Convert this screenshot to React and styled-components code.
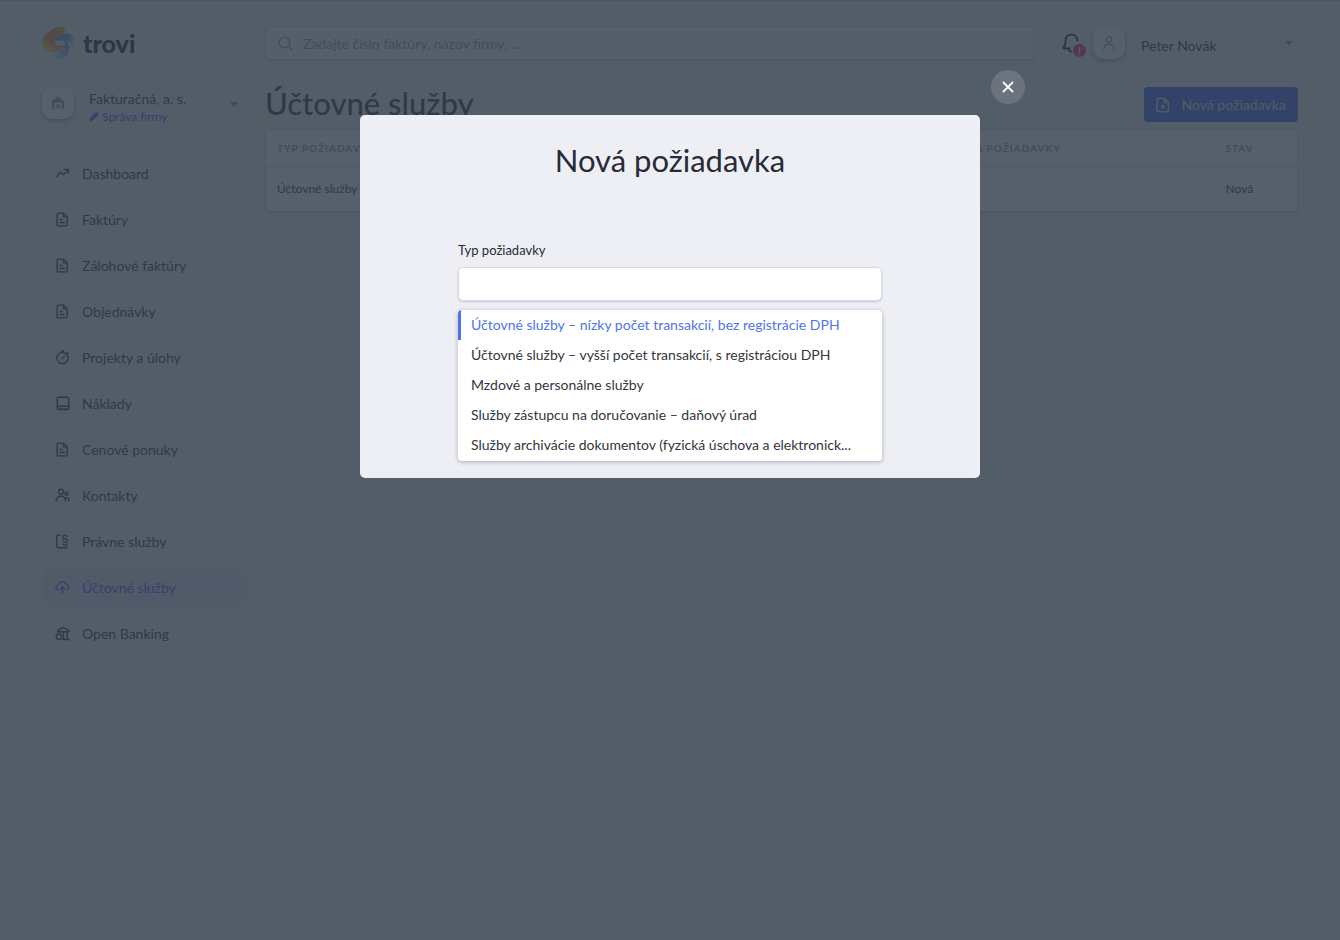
import { useState } from 'react'
import styled, { createGlobalStyle, css } from 'styled-components'

const COLORS = {
  primary: '#4a69f5',
  ink: '#35405a',
  text: '#262b38',
  muted: '#969dab',
  page: '#eef0f3',
  card: '#fdfbff',
  line: '#d2d7de',
}

const OPTIONS = [
  'Účtovné služby – nízky počet transakcií, bez registrácie DPH',
  'Účtovné služby – vyšší počet transakcií, s registráciou DPH',
  'Mzdové a personálne služby',
  'Služby zástupcu na doručovanie – daňový úrad',
  'Služby archivácie dokumentov (fyzická úschova a elektronick...',
]

const FilePath = () => (
  <>
    <path d="M3.8 1.2h5.4l3.8 3.8v8.2c0 .9-.7 1.6-1.6 1.6H3.8c-.9 0-1.6-.7-1.6-1.6V2.8c0-.9.7-1.6 1.6-1.6z" />
    <path d="M9 1.4v3.8h3.8M5.4 8h2M5.4 11.2h4.4" />
  </>
)

const ICONS = {
  trend: <path d="M1.8 11.5l3.4-4.4c.4-.5.9-.5 1.3-.1l1.9 1.8c.4.4.9.4 1.3-.1l4.2-4.8M10.2 3.6h4v3.8" />,
  file: <FilePath />,
  timer: (
    <>
      <circle cx="8" cy="8.6" r="6" />
      <path d="M8 2.4V1M6.8 1h2.4M12.6 3.8l.8-.8M7.6 9.2L10 6.8" />
    </>
  ),
  book: (
    <>
      <rect x="2.4" y="1.4" width="12.2" height="13" rx="1.4" />
      <path d="M2.6 11h11.8M4.5 14.2h9.4" />
    </>
  ),
  contacts: (
    <>
      <circle cx="6.4" cy="4" r="2.6" />
      <circle cx="12.2" cy="6.2" r="1.7" />
      <path d="M1.2 14c.2-3.4 2.2-5.2 5.2-5.200s4.800 1.800 5 5.200M11.600 10.400c2.200-.3 3.600 1 3.700 3.400" />
    </>
  ),
  law: (
    <>
      <path d="M5.4 1.2H3.6c-1 0-1.800.8-1.800 1.800v9.800c0 1 .8 1.800 1.800 1.800h7.400c1 0 1.800-.6 1.800-1.600" />
      <path strokeWidth="1.3" d="M13 2.600c-.4-.9-1.200-1.400-2.300-1.400-1.300 0-2.200.7-2.200 1.700 0 2.300 4.900 1.700 4.900 4.200 0 1-.9 1.600-2 1.600M13 10.600c-.3.800-1.100 1.300-2.200 1.300-1.300 0-2.300-.6-2.500-1.600M11 8.700c-1.400-.3-2.700-.8-2.700-2.200 0-.9.600-1.400 1.400-1.600" />
    </>
  ),
  upload: <path d="M3.400 10.800C1.900 10.300 1 9.100 1.200 7.700c.2-1.300 1.200-2 2.300-2.200C4.100 3.200 5.800 2 8.100 2s4 1.200 4.500 3.500c1.300.2 2.300 1.200 2.400 2.400.1 1.300-.7 2.300-2 2.800M8.100 14V7.600M5.800 9.600l2.300-2.300 2.300 2.300" />,
  bank: (
    <>
      <path d="M2.800 6.200V4.600L8.800 1.400l6 3.200v1.600H2.800M9 6.400v7M13 6.400v7M8.200 14.400h7" />
      <circle cx="4.2" cy="11.4" r="2.9" />
    </>
  ),
}

const MENU = [
  { label: 'Dashboard', icon: 'trend' },
  { label: 'Faktúry', icon: 'file' },
  { label: 'Zálohové faktúry', icon: 'file' },
  { label: 'Objednávky', icon: 'file' },
  { label: 'Projekty a úlohy', icon: 'timer' },
  { label: 'Náklady', icon: 'book' },
  { label: 'Cenové ponuky', icon: 'file' },
  { label: 'Kontakty', icon: 'contacts' },
  { label: 'Právne služby', icon: 'law' },
  { label: 'Účtovné služby', icon: 'upload' },
  { label: 'Open Banking', icon: 'bank' },
]

const LogoMark = () => (
  <svg width="34" height="34" viewBox="0 0 100 100" aria-hidden="true">
    <defs>
      <linearGradient id="warm" x1="0.9" y1="0" x2="0.3" y2="1">
        <stop offset="0" stopColor="#f7b65c" />
        <stop offset="0.45" stopColor="#f07a50" />
        <stop offset="1" stopColor="#ffd257" />
      </linearGradient>
      <linearGradient id="sky" x1="0" y1="0.3" x2="1" y2="0.6">
        <stop offset="0" stopColor="#4f90f0" />
        <stop offset="0.5" stopColor="#6aa8f5" />
        <stop offset="1" stopColor="#dfeafa" />
      </linearGradient>
      <linearGradient id="sea" x1="0.9" y1="0" x2="0.2" y2="1">
        <stop offset="0" stopColor="#5a94f0" />
        <stop offset="0.6" stopColor="#a3c4f5" />
        <stop offset="1" stopColor="#e9f0fa" />
      </linearGradient>
    </defs>
    <path fill="url(#sky)" d="M40 44C43 30 55 21 70 21C88 21 99 35 99 52C99 60 97 66 92 70C89 58 80 47 66 44C56 41 47 41 40 44z" />
    <path fill="url(#sea)" d="M66 44C78 49 82 61 79 74C75 92 57 103 39 97C32 95 27 91 24 84C43 82 62 72 67 55C68 51 68 47 66 44z" />
    <path fill="url(#warm)" d="M70 9C62 -1 45 -1 33 8L15 22C1 33 -2 45 2 58C6 73 20 80 35 78C49 76 60 68 66 55C56 60 38 59 37 50C37 44 42 40 47 36C57 28 64 20 70 9z" />
  </svg>
)

const PersonIcon = () => (
  <svg width="16" height="16" viewBox="0 0 16 16" fill="none" stroke="currentColor" strokeWidth="1.2" strokeLinecap="round" aria-hidden="true">
    <circle cx="8" cy="4.4" r="2.7" />
    <path d="M2.8 14.6c0-3.500 2-5.400 5.200-5.400s5.200 1.900 5.200 5.400" />
  </svg>
)

const HouseIcon = () => (
  <svg width="14" height="14" viewBox="0 0 14 14" fill="currentColor" aria-hidden="true">
    <path d="M7 .6L12.200 4.800c.5.400.8.900.8 1.500V13H10.600V8.200c0-1-.6-1.600-1.500-1.600H4.900c-.9 0-1.500.6-1.500 1.600V13H1V6.300c0-.6.300-1.100.8-1.500z" />
    <path d="M5.400 8.400h3.200V13H7.600v-2H6.400v2h-1z" />
  </svg>
)

const BellIcon = () => (
  <svg width="20" height="22" viewBox="0 0 20 22" fill="none" stroke="currentColor" strokeWidth="1.8" strokeLinecap="round" strokeLinejoin="round" aria-hidden="true">
    <path d="M8.500 16.500H3.100c-.8 0-1-.8-.5-1.300 1.300-1.200 1.900-2.800 1.900-4.700V8.300c0-3.300 2.600-5.700 5.900-5.700s5.900 2.400 5.900 5.700M7.900 16.800c0 1.500.8 2.600 2.200 2.800" />
  </svg>
)

const PencilIcon = () => (
  <svg width="10" height="10" viewBox="0 0 10 10" fill="currentColor" aria-hidden="true">
    <path d="M5.800 1.200c.9-1 2.200-1.100 3-.3.800.8.700 2-.3 3L4.100 8.300.7 9.400c-.3.100-.5-.1-.4-.4l1-3.600z" />
  </svg>
)

const AddFileIcon = () => (
  <svg width="14" height="16" viewBox="0 0 14 16" fill="none" stroke="currentColor" strokeWidth="1.5" strokeLinejoin="round" aria-hidden="true">
    <path d="M2.600 1.200h5.600L12.400 5.400v7.800c0 .9-.6 1.500-1.500 1.500H2.600c-.9 0-1.500-.6-1.500-1.500V2.700c0-.9.600-1.500 1.500-1.500z" />
    <path d="M8.200 1.400v4h4M6.800 7.800v4M4.800 9.800h4" />
  </svg>
)

export default function App() {
  const [open, setOpen] = useState(true)
  const [active, setActive] = useState('Účtovné služby')
  const [value, setValue] = useState('')
  const [highlighted, setHighlighted] = useState(0)

  return (
    <>
      <GlobalStyle />
      <Page>
        <Sidebar>
          <Logo href="#">
            <LogoMark />
            trovi
          </Logo>
          <Company>
            <Tile aria-label="Firma">
              <HouseIcon />
            </Tile>
            <CompanyInfo>
              <CompanyName>Fakturačná, a. s.</CompanyName>
              <CompanyLink href="#">
                <PencilIcon />
                Správa firmy
              </CompanyLink>
            </CompanyInfo>
            <Caret aria-hidden="true" />
          </Company>
          <Menu>
            {MENU.map(({ label, icon }) => (
              <MenuItem
                key={label}
                href="#"
                $active={label === active}
                onClick={() => setActive(label)}
              >
                <svg width="15" height="15" viewBox="0 0 16 16" aria-hidden="true">
                  {ICONS[icon]}
                </svg>
                {label}
              </MenuItem>
            ))}
          </Menu>
        </Sidebar>

        <Main>
          <TopBar>
            <Search>
              <svg width="15" height="15" viewBox="0 0 15 15" fill="none" stroke="currentColor" strokeWidth="1.3" strokeLinecap="round" aria-hidden="true">
                <circle cx="6.5" cy="6.5" r="5.3" />
                <path d="M10.6 10.6l3.400 3.400" />
              </svg>
              <SearchInput
                type="search"
                aria-label="Hľadať"
                placeholder="Zadajte číslo faktúry, názov firmy, ..."
              />
            </Search>
            <User>
              <BellButton aria-label="Upozornenia">
                <BellIcon />
                <Badge>!</Badge>
              </BellButton>
              <Tile aria-label="Profil">
                <PersonIcon />
              </Tile>
              <UserName>Peter Novák</UserName>
              <Caret aria-hidden="true" />
            </User>
          </TopBar>

          <TitleRow>
            <PageTitle>Účtovné služby</PageTitle>
            <PrimaryButton onClick={() => setOpen(true)}>
              <AddFileIcon />
              Nová požiadavka
            </PrimaryButton>
          </TitleRow>

          <TableCard>
            <Table>
              <colgroup>
                <col width="61%" />
                <col width="31%" />
                <col width="8%" />
              </colgroup>
              <thead>
                <tr>
                  <th>Typ požiadavky</th>
                  <th>Špecifikácia požiadavky</th>
                  <th>Stav</th>
                </tr>
              </thead>
              <tbody>
                <tr>
                  <td>Účtovné služby - nízky počet transakcií</td>
                  <td />
                  <td>Nová</td>
                </tr>
              </tbody>
            </Table>
          </TableCard>
        </Main>
      </Page>

      {open && (
        <Overlay>
          <Modal role="dialog" aria-modal="true" aria-labelledby="modal-title">
            <CloseButton aria-label="Zavrieť" onClick={() => setOpen(false)}>
              <svg width="12" height="12" viewBox="0 0 12 12" stroke="currentColor" strokeWidth="1.8" strokeLinecap="round" aria-hidden="true">
                <path d="M1.5 1.5l9 9M10.5 1.5l-9 9" />
              </svg>
            </CloseButton>
            <ModalTitle id="modal-title">Nová požiadavka</ModalTitle>
            <Label htmlFor="request-type">Typ požiadavky</Label>
            <Field
              id="request-type"
              role="combobox"
              aria-expanded="true"
              aria-controls="request-options"
              value={value}
              onChange={(e) => setValue(e.target.value)}
            />
            <Options id="request-options" role="listbox" aria-label="Typ požiadavky">
              {OPTIONS.map((option, i) => (
                <Option
                  key={option}
                  role="option"
                  aria-selected={i === highlighted}
                  $active={i === highlighted}
                  onMouseEnter={() => setHighlighted(i)}
                  onClick={() => setValue(option)}
                >
                  {option}
                </Option>
              ))}
            </Options>
          </Modal>
        </Overlay>
      )}
    </>
  )
}

const GlobalStyle = createGlobalStyle`
  * {
    box-sizing: border-box;
  }
  body {
    margin: 0;
    background: ${COLORS.page};
    color: ${COLORS.ink};
    font-family: Lato, 'Open Sans', sans-serif;
    font-size: 14px;
    line-height: 20px;
  }
  button, input {
    font-family: inherit;
    font-size: inherit;
    color: inherit;
  }
  button {
    padding: 0;
    border: 0;
    background: none;
    cursor: pointer;
  }
  a {
    color: inherit;
    text-decoration: none;
  }
`

const Page = styled.div`
  display: grid;
  grid-template-columns: 205px minmax(0, 1fr);
  gap: 18px;
  padding: 25px 42px;
  border-top: 1px solid #c4cad2;
`

const Sidebar = styled.aside`
  display: flex;
  flex-direction: column;
`

const Logo = styled.a`
  display: flex;
  align-items: center;
  gap: 7px;
  height: 34px;
  font-size: 25px;
  font-weight: 900;
  color: #2b3244;
`

const Company = styled.div`
  display: flex;
  align-items: flex-start;
  gap: 15px;
  margin-top: 27px;
  padding-right: 9px;

  > span {
    margin-top: 15px;
  }
`

const Tile = styled.button`
  display: flex;
  align-items: center;
  justify-content: center;
  flex: none;
  width: 32px;
  height: 32px;
  border-radius: 10px;
  background: ${COLORS.card};
  color: ${COLORS.muted};
  box-shadow: 0 2px 5px rgba(30, 40, 60, 0.4);
`

const CompanyInfo = styled.div`
  flex: 1;
`

const CompanyName = styled.div`
  margin-top: 3px;
  line-height: 18px;
`

const CompanyLink = styled.a`
  display: flex;
  align-items: center;
  gap: 3px;
  font-size: 12px;
  line-height: 18px;
  color: ${COLORS.primary};
`

const Caret = styled.span`
  border: 4px solid transparent;
  border-top: 5px solid ${COLORS.muted};
  border-bottom: 0;
`

const Menu = styled.nav`
  display: flex;
  flex-direction: column;
  gap: 9px;
  margin-top: 29px;
`

const MenuItem = styled.a`
  display: flex;
  align-items: center;
  gap: 12px;
  height: 37px;
  padding: 0 13px;
  border-radius: 5px;

  svg {
    fill: none;
    stroke: currentColor;
    stroke-width: 1.5;
    stroke-linecap: round;
    stroke-linejoin: round;
  }

  ${(props) =>
    props.$active &&
    css`
      background: #dfe2f7;
      color: ${COLORS.primary};
    `}
`

const Main = styled.main`
  display: flex;
  flex-direction: column;
`

const TopBar = styled.header`
  display: flex;
  align-items: center;
`

const Search = styled.div`
  display: flex;
  align-items: center;
  flex: 1;
  gap: 8px;
  height: 34px;
  padding: 0 12px;
  border: 1px solid ${COLORS.line};
  border-radius: 5px;
  background: #f8fafc;
  color: ${COLORS.muted};
  box-shadow: 0 1px 2px rgba(30, 40, 60, 0.2);
`

const SearchInput = styled.input`
  flex: 1;
  border: 0;
  outline: 0;
  background: none;

  &::placeholder {
    color: ${COLORS.muted};
  }
`

const User = styled.div`
  display: flex;
  align-items: center;
  width: 264px;
  padding: 0 5px 0 27px;
`

const BellButton = styled.button`
  position: relative;
  width: 20px;
  height: 22px;
  margin-right: 12px;
  color: #1d2638;
`

const Badge = styled.span`
  position: absolute;
  right: -5px;
  bottom: -3px;
  width: 13px;
  height: 13px;
  border-radius: 50%;
  background: #f0357f;
  color: #fff;
  font-size: 11px;
  font-weight: 700;
  line-height: 13px;
  text-align: center;
`

const UserName = styled.div`
  flex: 1;
  padding: 6px 0 0 16px;
`

const TitleRow = styled.div`
  display: flex;
  align-items: flex-start;
  justify-content: space-between;
  margin-top: 27px;
`

const PageTitle = styled.h1`
  margin: 0;
  font-size: 31px;
  font-weight: 500;
  line-height: 32px;
`

const PrimaryButton = styled.button`
  display: flex;
  align-items: center;
  gap: 11px;
  height: 35px;
  padding: 0 12px;
  border-radius: 4px;
  background: ${COLORS.primary};
  color: #dfe4f0;
  font-weight: 500;
`

const TableCard = styled.div`
  margin-top: 7px;
  border: 1px solid ${COLORS.line};
  border-radius: 4px;
  background: ${COLORS.card};
  box-shadow: 0 1px 2px rgba(30, 40, 60, 0.2);
  overflow: hidden;
`

const Table = styled.table`
  width: 100%;
  table-layout: fixed;
  border-collapse: collapse;
  text-align: left;
  white-space: nowrap;

  th {
    height: 36px;
    padding: 0 11px;
    border-bottom: 1px solid ${COLORS.line};
    color: ${COLORS.muted};
    font-size: 10px;
    font-weight: 700;
    letter-spacing: 1px;
    text-transform: uppercase;
  }

  td {
    height: 45px;
    padding: 0 11px;
    font-size: 12px;
  }
`

const Overlay = styled.div`
  position: fixed;
  inset: 0;
  display: flex;
  align-items: flex-start;
  justify-content: center;
  padding: 115px 42px 0;
  background: rgba(44, 56, 69, 0.8);
`

const Modal = styled.div`
  position: relative;
  display: flex;
  flex-direction: column;
  width: 100%;
  max-width: 620px;
  padding: 25px 98px 17px;
  border-radius: 5px;
  background: #eeeff4;
  color: ${COLORS.text};
`

const CloseButton = styled.button`
  position: absolute;
  top: -45px;
  right: -45px;
  display: flex;
  align-items: center;
  justify-content: center;
  width: 34px;
  height: 34px;
  border-radius: 50%;
  background: #6d727f;
  color: #fff;
`

const ModalTitle = styled.h2`
  margin: 0 0 60px;
  font-size: 31px;
  font-weight: 400;
  line-height: 40px;
  text-align: center;
`

const Label = styled.label`
  font-size: 13px;
  line-height: 20px;
`

const Field = styled.input`
  width: 100%;
  height: 34px;
  margin-top: 7px;
  padding: 0 12px;
  border: 1px solid #d8dae3;
  border-radius: 5px;
  outline: 0;
  background: #fff;
  box-shadow: 0 1px 2px rgba(40, 50, 80, 0.2);
`

const Options = styled.div`
  display: flex;
  flex-direction: column;
  margin-top: 9px;
  padding-bottom: 1px;
  border-radius: 4px;
  background: #fff;
  box-shadow: 0 1px 4px rgba(40, 50, 80, 0.35);
  overflow: hidden;
`

const Option = styled.button`
  height: 30px;
  padding: 0 14px 1px 10px;
  border-left: 3px solid ${(props) => (props.$active ? '#4f74ea' : 'transparent')};
  color: ${(props) => (props.$active ? '#4f74ea' : '#33363d')};
  font-size: 14px;
  text-align: left;
  text-overflow: ellipsis;
  white-space: nowrap;
  overflow: hidden;
`
